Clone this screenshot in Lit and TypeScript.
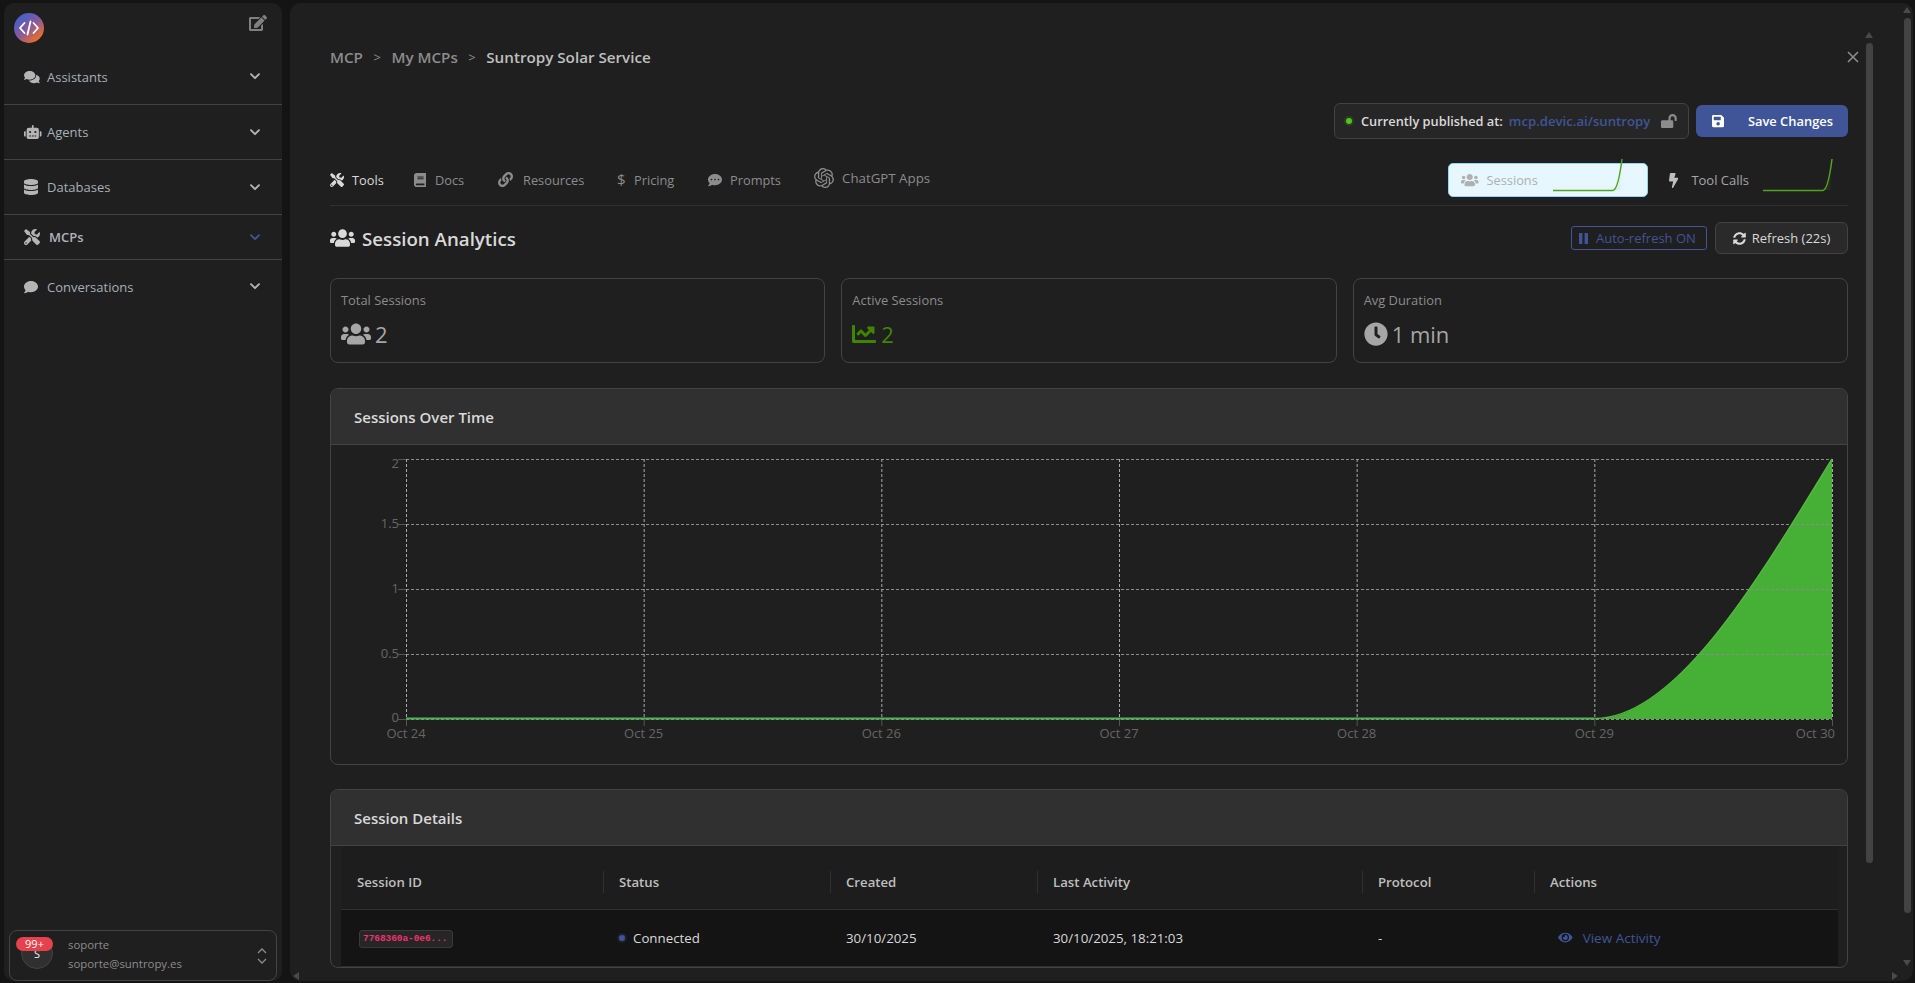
import { LitElement, html, css, svg } from "lit";
import { customElement } from "lit/decorators.js";

const P: Record<string, [number, number, string]> = {
  comments: [576, 512, "M416 192c0-88.4-93.1-160-208-160S0 103.6 0 192c0 34.3 14.1 65.9 38 92-13.4 30.2-35.5 54.2-35.8 54.5-2.2 2.3-2.8 5.7-1.5 8.7S4.8 352 8 352c36.6 0 66.9-12.3 88.7-25 32.2 15.7 70.3 25 111.3 25 114.9 0 208-71.6 208-160zm122 220c23.9-26 38-57.7 38-92 0-66.9-53.5-124.2-129.3-148.1.9 6.6 1.3 13.3 1.3 20.1 0 105.9-107.7 192-240 192-10.8 0-21.3-.8-31.7-1.9C207.8 439.6 281.8 480 368 480c41 0 79.1-9.2 111.3-25 21.8 12.7 52.1 25 88.7 25 3.2 0 6.1-1.9 7.3-4.8 1.3-2.9.7-6.3-1.5-8.7-.3-.3-22.4-24.2-35.8-54.5z"],
  comment: [512, 512, "M256 32C114.6 32 0 125.1 0 240c0 49.6 21.4 95 57 130.7C44.5 421.1 2.7 466 2.2 466.5c-2.2 2.3-2.8 5.7-1.5 8.7S4.8 480 8 480c66.3 0 116-31.8 140.6-51.4 32.7 12.3 69 19.4 107.4 19.4 141.4 0 256-93.1 256-208S397.4 32 256 32z"],
  dots: [512, 512, "M256 32C114.6 32 0 125.1 0 240c0 49.6 21.4 95 57 130.7C44.5 421.1 2.7 466 2.2 466.5c-2.2 2.3-2.8 5.7-1.5 8.7S4.8 480 8 480c66.3 0 116-31.8 140.6-51.4 32.7 12.3 69 19.4 107.4 19.4 141.4 0 256-93.1 256-208S397.4 32 256 32zM128 272c-17.7 0-32-14.3-32-32s14.3-32 32-32 32 14.3 32 32-14.3 32-32 32zm128 0c-17.7 0-32-14.3-32-32s14.3-32 32-32 32 14.3 32 32-14.3 32-32 32zm128 0c-17.7 0-32-14.3-32-32s14.3-32 32-32 32 14.3 32 32-14.3 32-32 32z"],
  database: [448, 512, "M448 73.143v45.714C448 159.143 347.667 192 224 192S0 159.143 0 118.857V73.143C0 32.857 100.333 0 224 0s224 32.857 224 73.143zM448 176v102.857C448 319.143 347.667 352 224 352S0 319.143 0 278.857V176c48.125 33.143 136.208 48.572 224 48.572S399.874 209.143 448 176zm0 160v102.857C448 479.143 347.667 512 224 512S0 479.143 0 438.857V336c48.125 33.143 136.208 48.572 224 48.572S399.874 369.143 448 336z"],
  robot: [640, 512, "M32,224H64V416H32A31.96166,31.96166,0,0,1,0,384V256A31.96166,31.96166,0,0,1,32,224Zm512-48V448a64.06328,64.06328,0,0,1-64,64H160a64.06328,64.06328,0,0,1-64-64V176a79.974,79.974,0,0,1,80-80H288V32a32,32,0,0,1,64,0V96H464A79.974,79.974,0,0,1,544,176ZM264,256a40,40,0,1,0-40,40A39.997,39.997,0,0,0,264,256Zm-8,128H192v32h64Zm96,0H288v32h64ZM456,256a40,40,0,1,0-40,40A39.997,39.997,0,0,0,456,256Zm-8,128H384v32h64ZM640,256V384a31.96166,31.96166,0,0,1-32,32H576V224h32A31.96166,31.96166,0,0,1,640,256Z"],
  tools: [512, 512, "M501.1 395.7L384 278.6c-23.1-23.1-57.6-27.6-85.4-13.9L192 158.1V96L64 0 0 64l96 128h62.1l106.6 106.6c-13.6 27.8-9.2 62.3 13.9 85.4l117.1 117.1c14.6 14.6 38.2 14.6 52.7 0l52.7-52.7c14.5-14.6 14.5-38.2 0-52.7zM331.7 225c28.3 0 54.9 11 74.9 31l19.4 19.4c15.8-6.9 30.8-16.5 43.8-29.5 37.1-37.1 49.7-89.3 37.9-136.7-2.2-9-13.5-12.1-20.1-5.5l-74.4 74.4-67.9-11.3L334 98.9l74.4-74.4c6.6-6.6 3.4-17.9-5.7-20.2-47.4-11.7-99.6.9-136.6 37.9-28.5 28.5-41.9 66.1-41.2 103.6l82.1 82.1c8.1-1.9 16.5-2.9 24.7-2.9zm-103.9 82l-56.7-56.7L18.7 402.8c-25 25-25 65.5 0 90.5s65.5 25 90.5 0l123.6-123.6c-7.6-19.9-9.9-41.6-5-62.7zM64 472c-13.2 0-24-10.8-24-24 0-13.3 10.7-24 24-24s24 10.7 24 24c0 13.2-10.7 24-24 24z"],
  users: [640, 512, "M96 224c35.3 0 64-28.7 64-64s-28.7-64-64-64-64 28.7-64 64 28.7 64 64 64zm448 0c35.3 0 64-28.7 64-64s-28.7-64-64-64-64 28.7-64 64 28.7 64 64 64zm32 32h-64c-17.6 0-33.5 7.1-45.1 18.6 40.3 22.1 68.9 62 75.1 109.4h66c17.7 0 32-14.3 32-32v-32c0-35.3-28.7-64-64-64zm-256 0c61.9 0 112-50.1 112-112S381.9 32 320 32 208 82.1 208 144s50.1 112 112 112zm76.8 32h-8.3c-20.8 10-43.9 16-68.5 16s-47.6-6-68.5-16h-8.3C179.6 288 128 339.6 128 403.2V432c0 26.5 21.5 48 48 48h288c26.5 0 48-21.5 48-48v-28.8c0-63.6-51.6-115.2-115.2-115.2zm-223.7-13.4C161.5 263.1 145.6 256 128 256H64c-35.3 0-64 28.7-64 64v32c0 17.7 14.3 32 32 32h65.9c6.3-47.4 34.9-87.3 75.2-109.4z"],
  edit: [576, 512, "M402.6 83.2l90.2 90.2c3.8 3.8 3.8 10 0 13.8L274.4 405.6l-92.8 10.3c-12.4 1.4-22.9-9.1-21.5-21.5l10.3-92.8L388.8 83.2c3.8-3.8 10-3.8 13.8 0zm162-22.9l-48.8-48.8c-15.2-15.2-39.9-15.2-55.2 0l-35.4 35.4c-3.8 3.8-3.8 10 0 13.8l90.2 90.2c3.8 3.8 10 3.8 13.8 0l35.4-35.4c15.2-15.3 15.2-40 0-55.2zM384 346.2V448H64V128h229.8c3.2 0 6.2-1.3 8.5-3.5l40-40c7.6-7.6 2.2-20.5-8.5-20.5H48C21.5 64 0 85.5 0 112v352c0 26.5 21.5 48 48 48h352c26.5 0 48-21.5 48-48V306.2c0-10.7-12.9-16-20.5-8.5l-40 40c-2.2 2.3-3.5 5.3-3.5 8.5z"],
  book: [448, 512, "M448 360V24c0-13.3-10.7-24-24-24H96C43 0 0 43 0 96v320c0 53 43 96 96 96h328c13.3 0 24-10.7 24-24v-16c0-7.5-3.5-14.3-8.9-18.7-4.2-15.4-4.2-59.3 0-74.7 5.4-4.3 8.9-11.1 8.9-18.6zM128 134c0-3.3 2.7-6 6-6h212c3.3 0 6 2.7 6 6v20c0 3.3-2.7 6-6 6H134c-3.3 0-6-2.7-6-6v-20zm0 64c0-3.3 2.7-6 6-6h212c3.3 0 6 2.7 6 6v20c0 3.3-2.7 6-6 6H134c-3.3 0-6-2.7-6-6v-20zm253.4 250H96c-17.7 0-32-14.3-32-32 0-17.6 14.4-32 32-32h285.4c-1.9 17.1-1.9 46.9 0 64z"],
  link: [512, 512, "M326.612 185.391c59.747 59.809 58.927 155.698.36 214.59-.11.12-.24.25-.36.37l-67.2 67.2c-59.27 59.27-155.699 59.262-214.96 0-59.27-59.26-59.27-155.7 0-214.96l37.106-37.106c9.84-9.84 26.786-3.3 27.294 10.606.648 17.722 3.826 35.527 9.69 52.721 1.986 5.822.567 12.262-3.783 16.612l-13.087 13.087c-28.026 28.026-28.905 73.66-1.155 101.96 28.024 28.579 74.086 28.749 102.325.51l67.2-67.19c28.191-28.191 28.073-73.757 0-101.83-3.701-3.694-7.429-6.564-10.341-8.569a16.037 16.037 0 0 1-6.947-12.606c-.396-10.567 3.348-21.456 11.698-29.806l21.054-21.055c5.521-5.521 14.182-6.199 20.584-1.731a152.482 152.482 0 0 1 20.522 17.197zM467.547 44.449c-59.261-59.262-155.69-59.27-214.96 0l-67.2 67.2c-.12.12-.25.25-.36.37-58.566 58.892-59.387 154.781.36 214.59a152.454 152.454 0 0 0 20.521 17.196c6.402 4.468 15.064 3.789 20.584-1.731l21.054-21.055c8.35-8.35 12.094-19.239 11.698-29.806a16.037 16.037 0 0 0-6.947-12.606c-2.912-2.005-6.64-4.875-10.341-8.569-28.073-28.073-28.191-73.639 0-101.83l67.2-67.19c28.239-28.239 74.3-28.069 102.325.51 27.75 28.3 26.872 73.934-1.155 101.96l-13.087 13.087c-4.35 4.35-5.769 10.79-3.783 16.612 5.864 17.194 9.042 34.999 9.69 52.721.509 13.906 17.454 20.446 27.294 10.606l37.106-37.106c59.271-59.259 59.271-155.699.001-214.959z"],
  bolt: [320, 512, "M296 160H180.6l42.6-129.8C227.2 15 215.7 0 200 0H56C44 0 33.8 8.9 32.2 20.8l-32 240C-1.7 275.2 9.5 288 24 288h118.7L96.6 482.5c-3.6 15.2 8 29.5 23.3 29.5 8.4 0 16.4-4.4 20.8-12l176-304c9.3-15.9-2.2-36-20.7-36z"],
  sync: [512, 512, "M370.72 133.28C339.458 104.008 298.888 87.962 255.848 88c-77.458.068-144.328 53.178-162.791 126.85-1.344 5.363-6.122 9.15-11.651 9.15H24.103c-7.498 0-13.194-6.807-11.807-14.176C33.933 94.924 134.813 8 256 8c66.448 0 126.791 26.136 171.315 68.685L463.03 40.97C478.149 25.851 504 36.559 504 57.941V192c0 13.255-10.745 24-24 24H345.941c-21.382 0-32.09-25.851-16.971-40.971l41.75-41.749zM32 296h134.059c21.382 0 32.09 25.851 16.971 40.971l-41.75 41.75c31.262 29.273 71.835 45.319 114.876 45.28 77.418-.07 144.315-53.144 162.787-126.849 1.344-5.363 6.122-9.15 11.651-9.15h57.304c7.498 0 13.194 6.807 11.807 14.176C478.067 417.076 377.187 504 256 504c-66.448 0-126.791-26.136-171.315-68.685L48.97 471.03C33.851 486.149 8 475.441 8 454.059V320c0-13.255 10.745-24 24-24z"],
  save: [448, 512, "M433.941 129.941l-83.882-83.882A48 48 0 0 0 316.118 32H48C21.49 32 0 53.49 0 80v352c0 26.51 21.49 48 48 48h352c26.51 0 48-21.49 48-48V163.882a48 48 0 0 0-14.059-33.941zM224 416c-35.346 0-64-28.654-64-64 0-35.346 28.654-64 64-64s64 28.654 64 64c0 35.346-28.654 64-64 64zm96-304.52V212c0 6.627-5.373 12-12 12H76c-6.627 0-12-5.373-12-12V108c0-6.627 5.373-12 12-12h228.52c3.183 0 6.235 1.264 8.485 3.515l3.48 3.48A11.996 11.996 0 0 1 320 111.48z"],
  unlock: [576, 512, "M423.5 0C339.5.3 272 69.5 272 153.5V224H48c-26.5 0-48 21.5-48 48v192c0 26.5 21.5 48 48 48h352c26.5 0 48-21.5 48-48V272c0-26.5-21.5-48-48-48h-48v-71.1c0-39.6 31.7-72.5 71.3-72.9 40-.4 72.7 32.1 72.7 72v80c0 13.3 10.7 24 24 24h32c13.3 0 24-10.7 24-24v-80C576 68 507.5-.3 423.5 0z"],
  chart: [512, 512, "M496 384H64V80c0-8.84-7.16-16-16-16H16C7.16 64 0 71.16 0 80v336c0 17.67 14.33 32 32 32h464c8.84 0 16-7.16 16-16v-32c0-8.84-7.16-16-16-16zM464 96H345.94c-21.38 0-32.09 25.85-16.97 40.97l32.4 32.4L288 242.75l-73.37-73.37c-12.5-12.5-32.76-12.5-45.25 0l-68.69 68.69c-6.25 6.25-6.25 16.38 0 22.63l22.62 22.62c6.25 6.25 16.38 6.25 22.63 0L192 237.25l73.37 73.37c12.5 12.5 32.76 12.5 45.25 0l96-96 32.4 32.4c15.12 15.12 40.97 4.41 40.97-16.97V112c0-8.84-7.16-16-16-16z"],
  clock: [512, 512, "M256,8C119,8,8,119,8,256S119,504,256,504,504,393,504,256,393,8,256,8Zm92.49,313h0l-20,25a16,16,0,0,1-22.49,2.5h0l-67-49.72a40,40,0,0,1-15-31.23V112a16,16,0,0,1,16-16h32a16,16,0,0,1,16,16V256l58,42.5A16,16,0,0,1,348.49,321Z"],
  eye: [576, 512, "M572.52 241.4C518.29 135.59 410.93 64 288 64S57.68 135.64 3.48 241.41a32.35 32.35 0 0 0 0 29.19C57.71 376.41 165.07 448 288 448s230.32-71.64 284.52-177.41a32.35 32.35 0 0 0 0-29.19zM288 400a144 144 0 1 1 144-144 143.93 143.93 0 0 1-144 144zm0-240a95.31 95.31 0 0 0-25.31 3.79 47.85 47.85 0 0 1-66.9 66.9A95.78 95.78 0 1 0 288 160z"],
  openai: [24, 24, "M22.2819 9.8211a5.9847 5.9847 0 0 0-.5157-4.9108 6.0462 6.0462 0 0 0-6.5098-2.9A6.0651 6.0651 0 0 0 4.9807 4.1818a5.9847 5.9847 0 0 0-3.9977 2.9 6.0462 6.0462 0 0 0 .7427 7.0966 5.98 5.98 0 0 0 .511 4.9107 6.051 6.051 0 0 0 6.5146 2.9001A5.9847 5.9847 0 0 0 13.2599 24a6.0557 6.0557 0 0 0 5.7718-4.2058 5.9894 5.9894 0 0 0 3.9977-2.9001 6.0557 6.0557 0 0 0-.7475-7.0729zm-9.022 12.6081a4.4755 4.4755 0 0 1-2.8764-1.0408l.1419-.0804 4.7783-2.7582a.7948.7948 0 0 0 .3927-.6813v-6.7369l2.02 1.1686a.071.071 0 0 1 .038.052v5.5826a4.504 4.504 0 0 1-4.4945 4.4944zm-9.6607-4.1254a4.4708 4.4708 0 0 1-.5346-3.0137l.142.0852 4.783 2.7582a.7712.7712 0 0 0 .7806 0l5.8428-3.3685v2.3324a.0804.0804 0 0 1-.0332.0615L9.74 19.9502a4.4992 4.4992 0 0 1-6.1408-1.6464zM2.3408 7.8956a4.485 4.485 0 0 1 2.3655-1.9728V11.6a.7664.7664 0 0 0 .3879.6765l5.8144 3.3543-2.0201 1.1685a.0757.0757 0 0 1-.071 0l-4.8303-2.7865A4.504 4.504 0 0 1 2.3408 7.872zm16.5963 3.8558L13.1038 8.364 15.1192 7.2a.0757.0757 0 0 1 .071 0l4.8303 2.7913a4.4944 4.4944 0 0 1-.6765 8.1042v-5.6772a.79.79 0 0 0-.407-.667zm2.0107-3.0231l-.142-.0852-4.7735-2.7818a.7759.7759 0 0 0-.7854 0L9.409 9.2297V6.8974a.0662.0662 0 0 1 .0284-.0615l4.8303-2.7866a4.4992 4.4992 0 0 1 6.6802 4.66zM8.3065 12.863l-2.02-1.1638a.0804.0804 0 0 1-.038-.0567V6.0742a4.4992 4.4992 0 0 1 7.3757-3.4537l-.142.0805L8.704 5.459a.7948.7948 0 0 0-.3927.6813zm1.0976-2.3654l2.602-1.4998 2.6069 1.4998v2.9994l-2.5974 1.4997-2.6067-1.4997Z"],
};

const ic = (n: string, h: number) => {
  const [w, vh, d] = P[n];
  return html`<svg class="ic" width=${(w / vh) * h} height=${h} viewBox="0 0 ${w} ${vh}" fill="currentColor"><path d=${d}></path></svg>`;
};
const chev = (cls = "") =>
  html`<svg class="chev ${cls}" width="10" height="7" viewBox="0 0 10 7" fill="none" stroke="currentColor" stroke-width="1.9" stroke-linecap="round" stroke-linejoin="round"><path d="M1 1.2 5 5.2l4-4"></path></svg>`;

const X0 = 406, X1 = 1832, Y0 = 719, Y1 = 459, OX = 331, OY = 445;
const xs = [0, 1, 2, 3, 4, 5, 6].map((i) => X0 + (i * (X1 - X0)) / 6);
const ys = [Y1, 524, 589, 654, Y0];
const labs = ["2", "1.5", "1", "0.5", "0"];
const dates = ["Oct 24", "Oct 25", "Oct 26", "Oct 27", "Oct 28", "Oct 29", "Oct 30"];

const chart = () => svg`
  <svg class="plot" width="1514" height="318" viewBox="${OX} ${OY} 1514 318">
    <path d="M1594.5 719C1673.7 719 1752.8 589 1832 459V719Z" fill="#45b035"></path>
    ${ys.map((y) => svg`<path d="M${X0 - 8} ${y + 0.5}H${X0}" stroke="#555" stroke-width="1" fill="none"></path>
      <path d="M${X0} ${y + 0.5}H${X1}" stroke="#8c8c8c" stroke-width="1" stroke-dasharray="3 2" fill="none"></path>`)}
    ${xs.map((x) => svg`<path d="M${x + 0.5} ${Y0}V${Y0 + 7}" stroke="#555" stroke-width="1" fill="none"></path>
      <path d="M${x + 0.5} ${Y1}V${Y0}" stroke="#aaa" stroke-width="1" stroke-dasharray="3 2" fill="none"></path>`)}
    <path d="M${X0} ${Y0 - 0.5}H1594.5" stroke="#4fb35a" stroke-width="2" fill="none"></path>
    <path d="M1594.5 718.5C1673.7 719 1752.8 589 1832 459" stroke="#52b93f" stroke-width="1.5" fill="none"></path>
    ${ys.map((y, i) => svg`<text x="${X0 - 7}" y="${y + 4 + (i === 0 ? 5 : 0) - (i === 4 ? 1 : 0)}" text-anchor="end" class="tick">${labs[i]}</text>`)}
    ${xs.map((x, i) => svg`<text x="${i === 6 ? 1835 : x}" y="738" text-anchor="${i === 6 ? "end" : "middle"}" class="tick">${dates[i]}</text>`)}
  </svg>`;

const spark = () => html`<svg class="spark" width="70" height="32" viewBox="0 0 70 32">
  <defs><linearGradient id="sg" x1="0" y1="0" x2="1" y2="0"><stop offset="0" stop-color="#52c41a" stop-opacity=".25"></stop><stop offset="1" stop-color="#52c41a" stop-opacity="0"></stop></linearGradient></defs>
  <path d="M60 31C63.5 30 66.5 20 69 1V31Z" fill="url(#sg)"></path>
  <path d="M0 31.5H60C63.5 30.5 66.5 20 69 0" fill="none" stroke="#52a51f" stroke-width="1.5"></path></svg>`;

@customElement("app-root")
export class AppRoot extends LitElement {
  static styles = css`
    :host { display: block; height: 983px; overflow: hidden; background: #141414; font-family: "Open Sans", "Noto Sans", sans-serif; color: #bfbfbf; }
    * { box-sizing: border-box; }
    svg { display: block; flex: none; }
    .root { display: flex; gap: 8px; height: 983px; padding: 3px 2px 2px 4px; }
    .side { width: 278px; flex: none; background: #1f1f1f; border-radius: 10px; display: flex; flex-direction: column; }
    .side-top { display: flex; justify-content: space-between; padding: 10px 15px 0 10px; height: 53px; }
    .logo { width: 30px; height: 30px; border-radius: 50%; background: linear-gradient(140deg, #2f62d6 5%, #8a5a9c 50%, #f2711c 88%); display: flex; align-items: center; justify-content: center; }
    .edit { color: #808080; margin-top: 2px; }
    .item { display: flex; align-items: center; padding: 0 22px 0 20px; border-bottom: 1px solid #434343; font-size: 13px; color: #a6b0b8; }
    .item .name { flex: 1; }
    .item .slot { width: 23px; display: flex; color: #b5b5b5; }
    .it-a { height: 49px; padding-bottom: 7px; }
    .it-b, .it-c { height: 55px; }
    .it-d { height: 45px; font-weight: 600; color: #b0b4b8; }
    .it-d .slot { width: 25px; }
    .it-e { height: 55px; border-bottom: none; padding-bottom: 2px; }
    .chev { color: #b5b5b5; }
    .chev.blue { color: #3f5597; }
    .user { margin: auto 5px 0; height: 51px; border: 1px solid #434343; border-radius: 8px; display: flex; align-items: center; padding: 0 9px 0 10px; font-size: 11.4px; color: #8c8c8c; }
    .av { width: 32px; height: 32px; border-radius: 50%; background: #303030; border: 1px solid #434343; position: relative; margin-top: -5px; margin-right: 15px; margin-left: 1px; display: flex; justify-content: center; align-items: center; color: #eee; font-size: 11px; flex: none; }
    .badge { position: absolute; top: -1px; left: -6px; width: 37px; height: 14px; border-radius: 8px; background: #e5424d; color: #fff; font-size: 11px; line-height: 14px; text-align: center; }
    .who { flex: 1; line-height: 19px; margin-top: -3px; }
    .updown { display: flex; flex-direction: column; gap: 4px; color: #8c8c8c; }

    .main { flex: 1; min-width: 0; background: #1f1f1f; border-radius: 10px; position: relative; overflow: hidden; }
    .scroll { height: 966px; overflow: hidden; padding: 42px 65px 0 40px; }
    .crumb { display: flex; align-items: center; height: 24px; font-size: 15.2px; font-weight: 600; color: #8c8c8c; }
    .crumb .sep { margin: 0 10.5px; font-weight: 400; font-size: 13px; }
    .crumb b { color: #bfbfbf; font-weight: 600; }
    .close { position: absolute; top: 48px; left: 1557px; color: #8c8c8c; }
    .actions { display: flex; justify-content: flex-end; align-items: center; gap: 7px; margin-top: 34px; height: 36px; }
    .pub { height: 36px; width: 355px; border: 1px solid #434343; border-radius: 6px; background: #262626; display: flex; align-items: center; padding: 0 11px; font-size: 12.8px; font-weight: 600; color: #d9d9d9; }
    .dot { width: 6px; height: 6px; border-radius: 50%; background: #52c41a; box-shadow: 0 0 0 2px rgba(82,196,26,.15); margin-right: 9px; flex: none; }
    .url { color: #3f5597; margin-left: 6px; flex: 1; white-space: nowrap; font-size: 13.2px; }
    .lock { color: #8c8c8c; }
    .save { width: 152px; height: 32px; border-radius: 6px; background: #3f5597; color: #fff; font-size: 12.9px; font-weight: 600; display: flex; align-items: center; padding: 0 15px 0 16px; justify-content: space-between; }
    .tabrow { display: flex; justify-content: space-between; align-items: center; margin-top: 21px; height: 46px; border-bottom: 1px solid #303030; }
    .tabs { display: flex; align-items: center; margin-top: -6px; }
    .tab { display: flex; align-items: center; font-size: 12.8px; color: #8c8c8c; }
    .tab.on { color: #d9d9d9; }
    .tab .i { width: 22px; display: flex; }
    .w84 { width: 84px; } .w119 { width: 119px; } .w91 { width: 91px; } .w106 { width: 106px; }
    .w84.docs .i { width: 21px; }
    .w119 .i { width: 25px; }
    .w91 .i { width: 17px; }
    .tab.gpt { margin-top: -3px; font-size: 13.3px; }
    .tab.gpt .i { width: 28px; }
    .tab .dollar { font-size: 15px; line-height: 15px; }
    .ana { display: flex; align-items: center; margin-top: -5px; }
    .pill { width: 200px; height: 34px; display: flex; align-items: center; padding: 0 0 0 12px; font-size: 12.8px; border-radius: 5px; color: #bfbfbf; }
    .pill.on { background: #e6f7ff; border: 1px solid #91d5ff; color: #b0b0b0; }
    .pill .lab { display: flex; align-items: center; }
    .pill.on .lab { width: 92px; }
    .pill.on .lab .ic { margin-right: 8px; }
    .pill.off { padding-left: 21px; color: #a6a6a6; font-size: 13px; }
    .pill.off .lab { width: 94px; }
    .pill.off .lab .ic { margin-right: 13px; color: #bfbfbf; }
    .spark { overflow: visible; margin-top: -11px; }
    .head { display: flex; align-items: center; margin-top: 16px; height: 32px; }
    .head h2 { margin: 0; flex: 1; display: flex; align-items: center; gap: 7px; font-size: 18.7px; font-weight: 600; color: #d9d9d9; }
    .auto { height: 24px; width: 136px; border: 1px solid #3f5597; border-radius: 3px; display: flex; align-items: center; padding-left: 7px; gap: 8px; color: #3f5597; font-size: 13px; margin-right: 8px; white-space: nowrap; }
    .ref { height: 32px; width: 133px; border: 1px solid #434343; border-radius: 6px; background: #2a2a2a; display: flex; align-items: center; justify-content: center; gap: 6px; color: #d9d9d9; font-size: 13px; white-space: nowrap; }
    .cards { display: grid; grid-template-columns: repeat(3, 1fr); gap: 16px; margin-top: 24px; }
    .card { height: 85px; border: 1px solid #434343; border-radius: 8px; padding: 12px 10px; }
    .card .t { font-size: 12.9px; line-height: 18px; color: #8c8c8c; }
    .card .v { display: flex; align-items: center; gap: 4px; margin-top: 9px; font-size: 22px; line-height: 32px; color: #a6a6a6; }
    .card .v.g { color: #3f8600; gap: 5px; }
    .panel { border: 1px solid #434343; border-radius: 8px; margin-top: 25px; overflow: hidden; }
    .panel + .panel { margin-top: 24px; }
    .phead { height: 56px; background: #303030; border-bottom: 1px solid #434343; display: flex; align-items: center; padding-left: 23px; font-size: 15px; font-weight: 600; color: #d9d9d9; }
    .plot { overflow: visible; }
    .tick { font-size: 13px; fill: #666; font-family: "Open Sans", sans-serif; }
    .chartbody { height: 319px; }
    .tablewrap { padding: 0 9px 0 10px; }
    table { width: 100%; border-collapse: collapse; table-layout: fixed; font-size: 13.3px; }
    .c1 { width: 262px; } .c2 { width: 227px; } .c3 { width: 207px; } .c4 { width: 325px; } .c5 { width: 172px; }
    th { height: 63px; background: #1d1d1d; font-weight: 600; text-align: left; padding: 10px 16px 0; color: #bfbfbf; border-bottom: 1px solid #303030; position: relative; font-size: 13.2px; }
    th + th::before { content: ""; position: absolute; left: 0; top: 25px; height: 22px; width: 1px; background: #303030; }
    td { height: 57px; background: #141414; padding: 0 16px; color: #d9d9d9; border-bottom: 1px solid #303030; }
    code { display: block; width: 94px; height: 18px; margin: 2px 0 0 2px; line-height: 16px; font-family: "Liberation Mono", monospace; font-size: 9.4px; font-weight: 700; color: #f0326e; background: #262626; border: 1px solid #3a3a3a; border-radius: 3px; padding: 0 3px; white-space: nowrap; overflow: hidden; }
    .status, .view { display: flex; align-items: center; }
    .bdot { width: 6px; height: 6px; border-radius: 50%; background: #3f5597; box-shadow: 0 0 0 2px rgba(63,85,151,.2); margin-right: 8px; }
    .view { color: #3f5597; gap: 10px; margin-left: 8px; font-size: 13.5px; }
    .sb { position: absolute; width: 7px; background: #434343; border-radius: 4px; }
    .arrow { position: absolute; width: 0; height: 0; }
    .up { border-left: 4px solid transparent; border-right: 4px solid transparent; border-bottom: 6px solid #4a4a4a; }
    .dn { border-left: 4px solid transparent; border-right: 4px solid transparent; border-top: 6px solid #4a4a4a; }
    .lf { border-top: 4px solid transparent; border-bottom: 4px solid transparent; border-right: 6px solid #4a4a4a; }
    .rt { border-top: 4px solid transparent; border-bottom: 4px solid transparent; border-left: 6px solid #4a4a4a; }
    .sb1 { left: 1576px; top: 40px; height: 820px; }
    .sb2 { left: 1614px; top: 15px; height: 895px; }
    .a1 { left: 1575px; top: 29px; }
    .a2 { left: 1613px; top: 4px; }
    .a3 { left: 1613px; top: 957px; }
    .a4 { left: 1602px; top: 969px; }
    .a5 { left: 3px; top: 969px; }
  `;

  render() {
    return html`<div class="root">
      <aside class="side">
        <div class="side-top">
          <div class="logo"><svg width="20" height="16" viewBox="0 0 20 16" fill="none" stroke="#fff" stroke-width="1.8" stroke-linecap="round" stroke-linejoin="round"><path d="M5.5 3 1 8l4.5 5M14.5 3 19 8l-4.5 5M11.5 1.5l-3 13"></path></svg></div>
          <span class="edit">${ic("edit", 16)}</span>
        </div>
        <div class="item it-a"><span class="slot">${ic("comments", 14)}</span><span class="name">Assistants</span>${chev()}</div>
        <div class="item it-b"><span class="slot">${ic("robot", 14)}</span><span class="name">Agents</span>${chev()}</div>
        <div class="item it-c"><span class="slot">${ic("database", 16)}</span><span class="name">Databases</span>${chev()}</div>
        <div class="item it-d"><span class="slot">${ic("tools", 16)}</span><span class="name">MCPs</span>${chev("blue")}</div>
        <div class="item it-e"><span class="slot">${ic("comment", 14)}</span><span class="name">Conversations</span>${chev()}</div>
        <div class="user">
          <div class="av">S<span class="badge">99+</span></div>
          <div class="who"><div>soporte</div><div>soporte@suntropy.es</div></div>
          <div class="updown">
            <svg width="10" height="6" viewBox="0 0 10 6" fill="none" stroke="currentColor" stroke-width="1.3"><path d="M1 5l4-4 4 4"></path></svg>
            <svg width="10" height="6" viewBox="0 0 10 6" fill="none" stroke="currentColor" stroke-width="1.3"><path d="M1 1l4 4 4-4"></path></svg>
          </div>
        </div>
      </aside>
      <main class="main">
        <div class="scroll">
          <div class="crumb"><span>MCP</span><span class="sep">&gt;</span><span>My MCPs</span><span class="sep">&gt;</span><b>Suntropy Solar Service</b></div>
          <div class="actions">
            <div class="pub"><span class="dot"></span>Currently published at:<span class="url">mcp.devic.ai/suntropy</span><span class="lock">${ic("unlock", 14)}</span></div>
            <div class="save">${ic("save", 14)}<span>Save Changes</span></div>
          </div>
          <div class="tabrow">
            <div class="tabs">
              <div class="tab on w84"><span class="i">${ic("tools", 14)}</span>Tools</div>
              <div class="tab w84 docs"><span class="i">${ic("book", 14)}</span>Docs</div>
              <div class="tab w119"><span class="i">${ic("link", 15)}</span>Resources</div>
              <div class="tab w91"><span class="i dollar">$</span>Pricing</div>
              <div class="tab w106"><span class="i">${ic("dots", 14)}</span>Prompts</div>
              <div class="tab gpt"><span class="i">${ic("openai", 20)}</span>ChatGPT Apps</div>
            </div>
            <div class="ana">
              <div class="pill on"><span class="lab">${ic("users", 14)}Sessions</span>${spark()}</div>
              <div class="pill off"><span class="lab">${ic("bolt", 15)}Tool Calls</span>${spark()}</div>
            </div>
          </div>
          <div class="head">
            <h2>${ic("users", 20)}Session Analytics</h2>
            <div class="auto"><svg width="9" height="11" viewBox="0 0 9 11" fill="currentColor"><rect width="3.4" height="11" rx=".6"></rect><rect x="5.6" width="3.4" height="11" rx=".6"></rect></svg>Auto-refresh ON</div>
            <div class="ref">${ic("sync", 13)}Refresh (22s)</div>
          </div>
          <div class="cards">
            <div class="card"><div class="t">Total Sessions</div><div class="v">${ic("users", 24)}2</div></div>
            <div class="card"><div class="t">Active Sessions</div><div class="v g">${ic("chart", 24)}2</div></div>
            <div class="card"><div class="t">Avg Duration</div><div class="v">${ic("clock", 24)}1 min</div></div>
          </div>
          <section class="panel">
            <div class="phead">Sessions Over Time</div>
            <div class="chartbody">${chart()}</div>
          </section>
          <section class="panel">
            <div class="phead">Session Details</div>
            <div class="tablewrap">
              <table>
                <colgroup><col class="c1"><col class="c2"><col class="c3"><col class="c4"><col class="c5"><col></colgroup>
                <thead><tr><th>Session ID</th><th>Status</th><th>Created</th><th>Last Activity</th><th>Protocol</th><th>Actions</th></tr></thead>
                <tbody><tr>
                  <td><code>7768360a-0e6...</code></td>
                  <td><span class="status"><span class="bdot"></span>Connected</span></td>
                  <td>30/10/2025</td>
                  <td>30/10/2025, 18:21:03</td>
                  <td>-</td>
                  <td><span class="view">${ic("eye", 13)}View Activity</span></td>
                </tr></tbody>
              </table>
            </div>
          </section>
        </div>
        <svg class="close" width="12" height="12" viewBox="0 0 12 12" stroke="currentColor" stroke-width="1.6" fill="none"><path d="M1 1l10 10M11 1 1 11"></path></svg>
        <div class="sb sb1"></div><div class="sb sb2"></div>
        <div class="arrow up a1"></div><div class="arrow up a2"></div><div class="arrow dn a3"></div><div class="arrow rt a4"></div><div class="arrow lf a5"></div>
      </main>
    </div>`;
  }
}
